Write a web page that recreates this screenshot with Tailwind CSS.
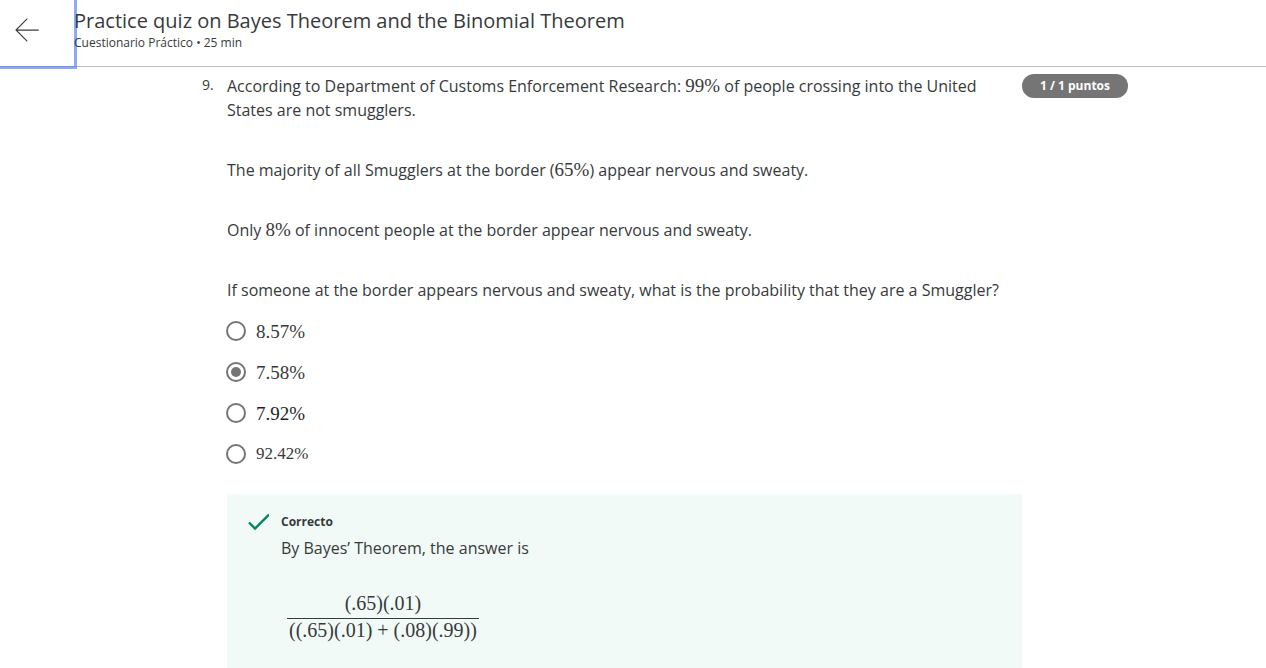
<!DOCTYPE html>
<html lang="es">
<head>
<meta charset="utf-8">
<meta name="viewport" content="width=device-width, initial-scale=1">
<title>Practice quiz on Bayes Theorem and the Binomial Theorem</title>
<script src="https://cdn.jsdelivr.net/npm/@tailwindcss/browser@4"></script>
</head>
<body class="h-screen overflow-hidden bg-white font-['Open_Sans',sans-serif] text-base text-[#373a3c]">
<div class="flex h-full flex-col">
  <header class="flex h-[67px] shrink-0 border-b border-[#bdbdbd]">
    <button type="button" aria-label="Volver" class="flex w-[74px] shrink-0 items-center pl-3.5 shadow-[0_0_0_3px_#557cf7a8]">
      <svg class="mt-[-6px] size-[26px]" viewBox="0 0 26 26" fill="none" stroke="#373a3c" stroke-width="1.1" aria-hidden="true"><path d="M13.3 1.7 2 13l11.3 11.3M2 13.1H24.7"/></svg>
    </button>
    <div class="pt-[7px]">
      <h1 class="text-xl leading-7">Practice quiz on Bayes Theorem and the Binomial Theorem</h1>
      <p class="text-xs leading-4">Cuestionario Práctico • 25 min</p>
    </div>
  </header>

  <main class="flex min-h-0 flex-1 items-start overflow-hidden pr-[138px] pl-[202px] pt-[7px]">
    <span class="w-[25px] shrink-0 text-sm leading-[22px]">9.</span>
    <section class="min-w-0 flex-1">
      <div class="flex flex-col gap-9 leading-6">
        <p>According to Department of Customs Enforcement Research: <span class="font-['Liberation_Serif',serif] text-[19px] leading-none">99%</span> of people crossing into the United States are not smugglers.</p>
        <p>The majority of all Smugglers at the border (<span class="font-['Liberation_Serif',serif] text-[19px] leading-none">65%</span>) appear nervous and sweaty.</p>
        <p>Only <span class="font-['Liberation_Serif',serif] text-[19px] leading-none">8%</span> of innocent people at the border appear nervous and sweaty.</p>
        <p>If someone at the border appears nervous and sweaty, what is the probability that they are a Smuggler?</p>
      </div>

      <fieldset aria-label="Respuesta" class="mt-2 mb-5 font-['Liberation_Serif',serif] text-[19px]">
        <label class="flex h-[41px] items-center gap-2.5">
          <input type="radio" name="answer" class="ml-[-1px] size-5 appearance-none rounded-full border-2 border-[#757575]">
          <span class="pt-1">8.57%</span>
        </label>
        <label class="flex h-[41px] items-center gap-2.5">
          <input type="radio" name="answer" checked class="ml-[-1px] size-5 appearance-none rounded-full border-2 border-[#757575] bg-clip-content p-[3px] checked:bg-[#757575]">
          <span class="pt-1">7.58%</span>
        </label>
        <label class="flex h-[41px] items-center gap-2.5 text-[#1f1f1f]">
          <input type="radio" name="answer" class="ml-[-1px] size-5 appearance-none rounded-full border-2 border-[#757575]">
          <span class="pt-1">7.92%</span>
        </label>
        <label class="flex h-[41px] items-center gap-2.5 text-[17px]">
          <input type="radio" name="answer" class="ml-[-1px] size-5 appearance-none rounded-full border-2 border-[#757575]">
          <span>92.42%</span>
        </label>
      </fieldset>

      <div class="flex gap-3 bg-[#f2faf7] px-5 pt-4 pb-7">
        <svg class="mt-[1px] h-6 w-[22px] shrink-0" viewBox="0 0 22 24" fill="none" stroke="#008859" stroke-width="2.4" aria-hidden="true"><path d="m2 11.5 6 6L22 3.5"/></svg>
        <div>
          <h2 class="text-xs leading-6 font-bold">Correcto</h2>
          <p class="leading-7">By Bayes’ Theorem, the answer is</p>
          <div class="mt-7 ml-1.5 inline-flex flex-col text-center font-['Liberation_Serif',serif] text-xl">
            <span class="pb-[2px] leading-[26px]">(.65)(.01)</span>
            <span class="border-t border-[#373a3c] px-0.5 leading-[22px]">((.65)(.01) + (.08)(.99))</span>
          </div>
        </div>
      </div>
    </section>
    <span class="flex h-6 w-[106px] shrink-0 items-center justify-center rounded-full bg-[#757575] text-xs font-bold text-white">1 / 1 puntos</span>
  </main>
</div>
</body>
</html>
